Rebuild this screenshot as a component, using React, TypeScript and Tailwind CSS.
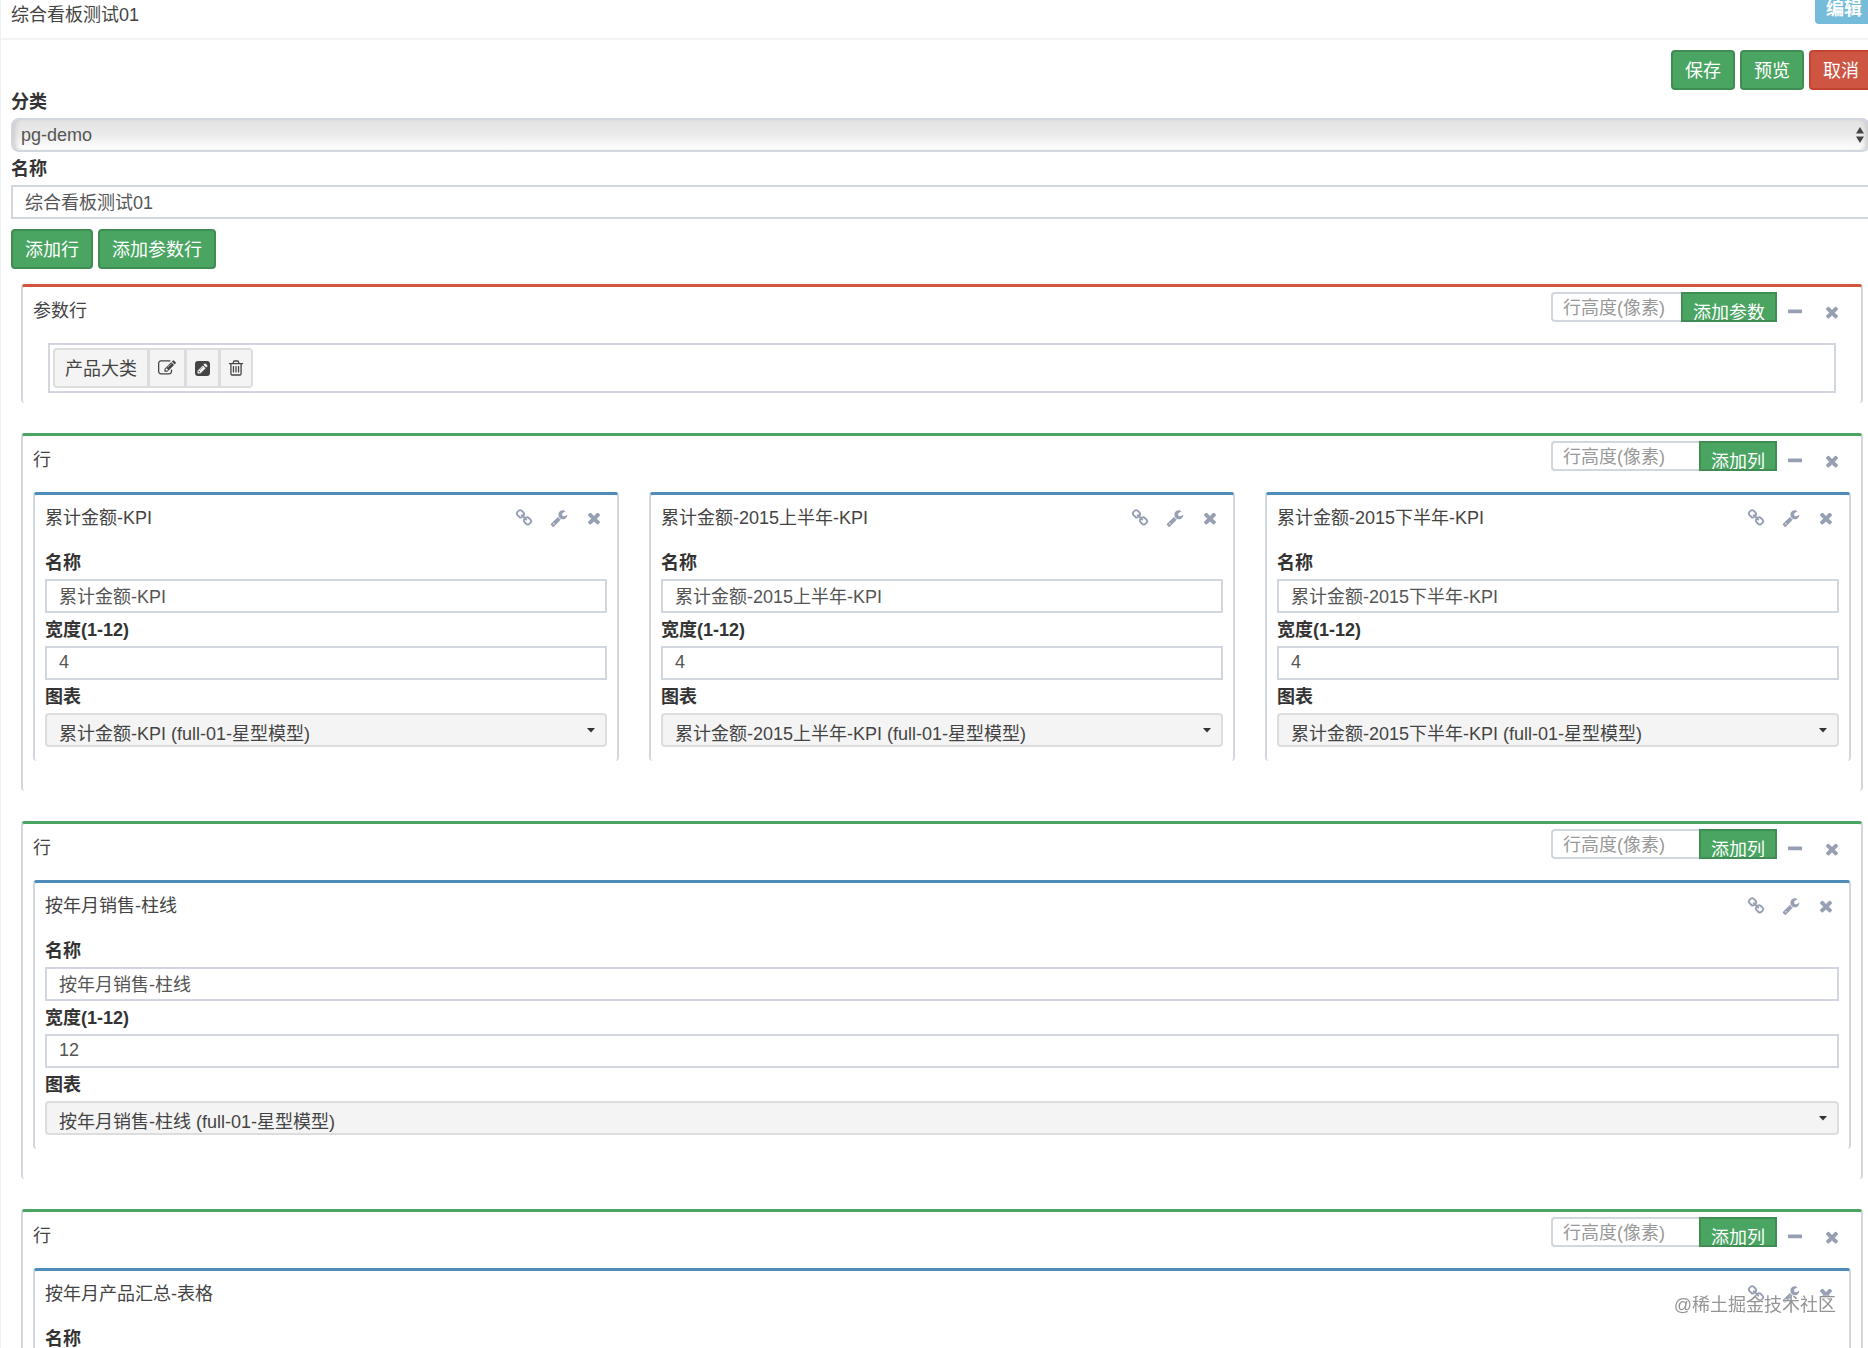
import { useId } from 'react'
import type { ReactNode } from 'react'

const ICONS = {
  times:
    'M1490 1322q0 40-28 68l-136 136q-28 28-68 28t-68-28l-294-294-294 294q-28 28-68 28t-68-28l-136-136q-28-28-28-68t28-68l294-294-294-294q-28-28-28-68t28-68l136-136q28-28 68-28t68 28l294 294 294-294q28-28 68-28t68 28l136 136q28 28 28 68t-28 68l-294 294 294 294q28 28 28 68z',
  minus:
    'M1600 736v192q0 40-28 68t-68 28h-1216q-40 0-68-28t-28-68v-192q0-40 28-68t68-28h1216q40 0 68 28t28 68z',
  link:
    'M1520 1216q0-40-28-68l-208-208q-28-28-68-28-42 0-72 32 3 3 19 18.5t21.5 21.5 15 19 13 25.5 3.5 27.5q0 40-28 68t-68 28q-15 0-27.5-3.5t-25.5-13-19-15-21.5-21.5-18.5-19q-33 31-33 73 0 40 28 68l206 207q27 27 68 27 40 0 68-26l147-146q28-28 28-67zm-703-705q0-40-28-68l-206-207q-28-28-68-28-39 0-68 27l-147 146q-28 28-28 67 0 40 28 68l208 208q27 27 68 27 42 0 72-31-3-3-19-18.5t-21.5-21.5-15-19-13-25.5-3.5-27.5q0-40 28-68t68-28q15 0 27.5 3.5t25.5 13 19 15 21.5 21.5 18.5 19q33-31 33-73zm895 705q0 120-85 203l-147 146q-83 83-203 83-121 0-204-85l-206-207q-83-83-83-203 0-123 88-209l-88-88q-86 88-208 88-120 0-204-84l-208-208q-84-84-84-204t85-203l147-146q83-83 203-83 121 0 204 85l206 207q83 83 83 203 0 123-88 209l88 88q86-88 208-88 120 0 204 84l208 208q84 84 84 204z',
  wrench:
    'M448 1472q0-26-19-45t-45-19-45 19-19 45 19 45 45 19 45-19 19-45zm644-420l-682 682q-37 37-90 37-52 0-91-37l-106-108q-38-36-38-90 0-53 38-91l681-681q39 98 114.5 173.5t173.5 114.5zm634-435q0 39-23 106-47 134-164.5 217.5t-258.5 83.5q-185 0-316.5-131.5t-131.5-316.5 131.5-316.5 316.5-131.5q58 0 121.5 16.5t107.5 46.5q16 11 16 28t-16 28l-293 169v224l193 107q5-3 79-48.5t135.5-81 70.5-35.5q15 0 23.5 10t8.5 25z',
  edit:
    'M888 1184l116-116-152-152-116 116v56h96v96h56zm440-720q-16-16-33 1l-350 350q-17 17-1 33t33-1l350-350q17-17 1-33zm80 594v190q0 119-84.5 203.5t-203.5 84.5h-832q-119 0-203.5-84.5t-84.5-203.5v-832q0-119 84.5-203.5t203.5-84.5h832q63 0 117 25 15 7 18 23 3 17-9 29l-49 49q-14 14-32 8-23-6-45-6h-832q-66 0-113 47t-47 113v832q0 66 47 113t113 47h832q66 0 113-47t47-113v-126q0-13 9-22l64-64q15-15 35-7t20 29zm-96-738l288 288-672 672h-288v-288zm444 132l-92 92-288-288 92-92q28-28 68-28t68 28l152 152q28 28 28 68t-28 68z',
  pencilSquare:
    'M404 1108l152 152-52 52h-56v-96h-96v-56zm414-390q14 13-3 30l-291 291q-17 17-30 3-14-13 3-30l291-291q17-17 30-3zm-274 690l544-544-288-288-544 544v288h288zm608-608l92-92q28-28 28-68t-28-68l-152-152q-28-28-68-28t-68 28l-92 92zm384-384v960q0 119-84.5 203.5t-203.5 84.5h-960q-119 0-203.5-84.5t-84.5-203.5v-960q0-119 84.5-203.5t203.5-84.5h960q119 0 203.5 84.5t84.5 203.5z',
  trash:
    'M704 736v576q0 14-9 23t-23 9h-64q-14 0-23-9t-9-23v-576q0-14 9-23t23-9h64q14 0 23 9t9 23zm256 0v576q0 14-9 23t-23 9h-64q-14 0-23-9t-9-23v-576q0-14 9-23t23-9h64q14 0 23 9t9 23zm256 0v576q0 14-9 23t-23 9h-64q-14 0-23-9t-9-23v-576q0-14 9-23t23-9h64q14 0 23 9t9 23zm128 724v-948h-896v948q0 22 7 40.5t14.5 27 10.5 8.5h832q3 0 10.5-8.5t14.5-27 7-40.5zm-672-1076h448l-48-117q-7-9-17-11h-317q-10 2-17 11zm928 32v64q0 14-9 23t-23 9h-96v948q0 83-47 143.5t-113 60.5h-832q-66 0-113-58.5t-47-141.5v-952h-96q-14 0-23-9t-9-23v-64q0-14 9-23t23-9h309l70-167q15-37 54-63t79-26h320q40 0 79 26t54 63l70 167h309q14 0 23 9t9 23z',
}

const ROWS = [
  {
    id: 'kpi',
    cards: [
      { name: '累计金额-KPI', width: 4 },
      { name: '累计金额-2015上半年-KPI', width: 4 },
      { name: '累计金额-2015下半年-KPI', width: 4 },
    ],
  },
  { id: 'monthly', cards: [{ name: '按年月销售-柱线', width: 12 }] },
  { id: 'products', cards: [{ name: '按年月产品汇总-表格', width: 12 }] },
]

function Icon({ name, viewBox = '0 0 1792 1792', className = 'size-[18px]' }: {
  name: keyof typeof ICONS
  viewBox?: string
  className?: string
}) {
  return (
    <svg viewBox={viewBox} className={className} fill="currentColor" aria-hidden="true">
      <path d={ICONS[name]} />
    </svg>
  )
}

function ToolButton({ icon, label }: { icon: keyof typeof ICONS; label: string }) {
  return (
    <button type="button" aria-label={label} className="flex h-10 w-[35px] items-center justify-center text-[#97a0b3]">
      <Icon name={icon} />
    </button>
  )
}

function Button({ children, danger }: { children: ReactNode; danger?: boolean }) {
  return (
    <button
      type="button"
      className={
        danger
          ? 'h-10 shrink-0 rounded border-2 border-[#c24532] bg-[#cd5542] px-3 pt-0.5 text-white'
          : 'h-10 shrink-0 rounded border-2 border-[#3f8d52] bg-[#4aa462] px-3 pt-0.5 text-white'
      }
    >
      {children}
    </button>
  )
}

function TextField({ label, value }: { label: string; value: string }) {
  const id = useId()
  return (
    <div>
      <label htmlFor={id} className="block pt-0.5 font-bold leading-[31px] text-[#333]">
        {label}
      </label>
      <input
        id={id}
        type="text"
        defaultValue={value}
        className="block h-[34px] w-full border-2 border-[#d2d6de] bg-white px-3 pb-0.5 text-[#555] outline-none"
      />
    </div>
  )
}

function ChartSelect({ value }: { value: string }) {
  const id = useId()
  return (
    <div>
      <label htmlFor={id} className="block pt-0.5 font-bold leading-[31px] text-[#333]">
        图表
      </label>
      <div className="relative">
        <select
          id={id}
          className="block h-[34px] w-full appearance-none rounded border-2 border-[#ddd] bg-[#f4f4f4] px-3 pt-1.5 text-[#444] outline-none"
        >
          <option>{value}</option>
        </select>
        <svg viewBox="0 0 10 5" className="pointer-events-none absolute right-[11px] top-[15px] h-[5px] w-[10px]" fill="#333">
          <path d="M1 0h8L5 4.5z" />
        </svg>
      </div>
    </div>
  )
}

function RowBox({ title, action, param, children }: {
  title: string
  action: string
  param?: boolean
  children: ReactNode
}) {
  return (
    <section
      className={
        param
          ? 'mb-[30px] rounded border-x-2 border-t-[3px] border-x-[#d2d6de] border-t-[#d2553f]'
          : 'mb-[30px] rounded border-x-2 border-t-[3px] border-x-[#d2d6de] border-t-[#4aa462]'
      }
    >
      <header className="flex h-[46px] items-start justify-between pl-2.5 pr-3">
        <h3 className="pt-0.5 leading-[44px]">{title}</h3>
        <div className="flex pt-[5px]">
          <div className="flex h-[30px] w-[226px]">
            <input
              type="text"
              aria-label="行高度(像素)"
              placeholder="行高度(像素)"
              className="h-full w-0 grow rounded-l border-2 border-r-0 border-[#d2d6de] px-2.5 pt-0.5 text-[#555] outline-none placeholder:text-[#999]"
            />
            <button
              type="button"
              className="flex h-full shrink-0 items-start overflow-hidden border-2 border-[#3f8d52] bg-[#4aa462] px-2.5 pt-1.5 leading-[26px] text-white"
            >
              {action}
            </button>
          </div>
          <div className="flex gap-0.5">
            <ToolButton icon="minus" label="折叠" />
            <ToolButton icon="times" label="删除" />
          </div>
        </div>
      </header>
      {children}
    </section>
  )
}

function ChartCard({ name, width }: { name: string; width: number }) {
  return (
    <article className="rounded border-x-2 border-t-[3px] border-x-[#d2d6de] border-t-[#4f8bb9] pb-[14px]">
      <header className="flex h-[46px] items-center justify-between pl-2.5 pr-1.5">
        <h4>{name}</h4>
        <div className="flex">
          <ToolButton icon="link" label="链接" />
          <ToolButton icon="wrench" label="设置" />
          <ToolButton icon="times" label="删除" />
        </div>
      </header>
      <div className="px-2.5 pt-[5px]">
        <TextField label="名称" value={name} />
        <TextField label="宽度(1-12)" value={String(width)} />
        <ChartSelect value={`${name} (full-01-星型模型)`} />
      </div>
    </article>
  )
}

function ParamTag({ name }: { name: string }) {
  return (
    <div className="flex h-10 text-[#444]">
      <button type="button" className="rounded-l border-2 border-[#ddd] bg-[#f4f4f4] px-2.5 pt-0.5">
        {name}
      </button>
      <button type="button" aria-label="编辑参数" className="-ml-px border-2 border-[#ddd] bg-[#f4f4f4] px-2">
        <Icon name="edit" />
      </button>
      <button type="button" aria-label="重命名" className="-ml-px border-2 border-[#ddd] bg-[#f4f4f4] px-2">
        <Icon name="pencilSquare" viewBox="0 128 1536 1536" className="size-[15px]" />
      </button>
      <button type="button" aria-label="删除参数" className="-ml-px rounded-r border-2 border-[#ddd] bg-[#f4f4f4] px-2">
        <Icon name="trash" viewBox="192 0 1408 1792" className="h-[18px] w-[14px]" />
      </button>
    </div>
  )
}

export default function App() {
  return (
    <div className="h-screen overflow-hidden border-l border-[#ecf0f5] bg-white font-['Liberation_Sans','Noto_Sans_CJK_SC',sans-serif] text-[18px] leading-[26px] text-[#444]">
      {/* Title bar */}
      <header className="flex h-10 items-start justify-between border-b-2 border-[#f4f4f4] pl-2.5">
        <h1 className="pt-0.5">综合看板测试01</h1>
        <span className="-mr-[5px] h-6 shrink-0 rounded-b bg-[#74bcda] px-[11px] font-bold leading-[18px] text-white">编辑</span>
      </header>

      <main>
        <form className="pl-2.5 pt-2.5">
          <div className="-mr-[5px] flex h-[35px] justify-end gap-[5px]">
            <Button>保存</Button>
            <Button>预览</Button>
            <Button danger>取消</Button>
          </div>

          <label htmlFor="category" className="block w-fit pt-0.5 font-bold leading-[31px] text-[#333]">
            分类
          </label>
          <div className="relative -mr-0.5">
            <select
              id="category"
              className="block h-[34px] w-full appearance-none rounded-lg border-2 border-[#d2d6de] bg-linear-to-b from-[#e3e3e3] via-[#ebebeb] to-white px-2 text-[#555] shadow-[inset_5px_0_5px_-3px_#c8c8c8,inset_-5px_0_5px_-3px_#c8c8c8] outline-none"
            >
              <option>pg-demo</option>
            </select>
            <svg viewBox="0 0 8 16" className="pointer-events-none absolute right-[6px] top-[9px] h-4 w-2" fill="#444">
              <path d="M4 0l4 6.5H0zM4 16L0 9.5h8z" />
            </svg>
          </div>
          <div className="-mr-[5px]">
            <TextField label="名称" value="综合看板测试01" />
          </div>

          <div className="mt-2.5 flex gap-[5px]">
            <Button>添加行</Button>
            <Button>添加参数行</Button>
          </div>
        </form>

        {/* Board layout */}
        <div className="ml-5 mr-[5px] mt-[15px]">
          <RowBox title="参数行" action="添加参数" param>
            <div className="px-[25px] pb-2.5 pt-2.5">
              <div className="h-[50px] border-2 border-[#d2d6de] p-[3px]">
                <ParamTag name="产品大类" />
              </div>
            </div>
          </RowBox>

          {ROWS.map((row) => (
            <RowBox key={row.id} title="行" action="添加列">
              <div
                className={
                  row.cards.length === 3
                    ? 'grid grid-cols-3 gap-[30px] px-2.5 pb-[30px] pt-2.5'
                    : 'grid grid-cols-1 px-2.5 pb-[30px] pt-2.5'
                }
              >
                {row.cards.map((card) => (
                  <ChartCard key={card.name} name={card.name} width={card.width} />
                ))}
              </div>
            </RowBox>
          ))}
        </div>
      </main>

      <div className="pointer-events-none fixed bottom-[30px] right-8 text-[#888]/90 [text-shadow:0_0_2px_#fff,1px_1px_1px_#fff]">
        @稀土掘金技术社区
      </div>
    </div>
  )
}
